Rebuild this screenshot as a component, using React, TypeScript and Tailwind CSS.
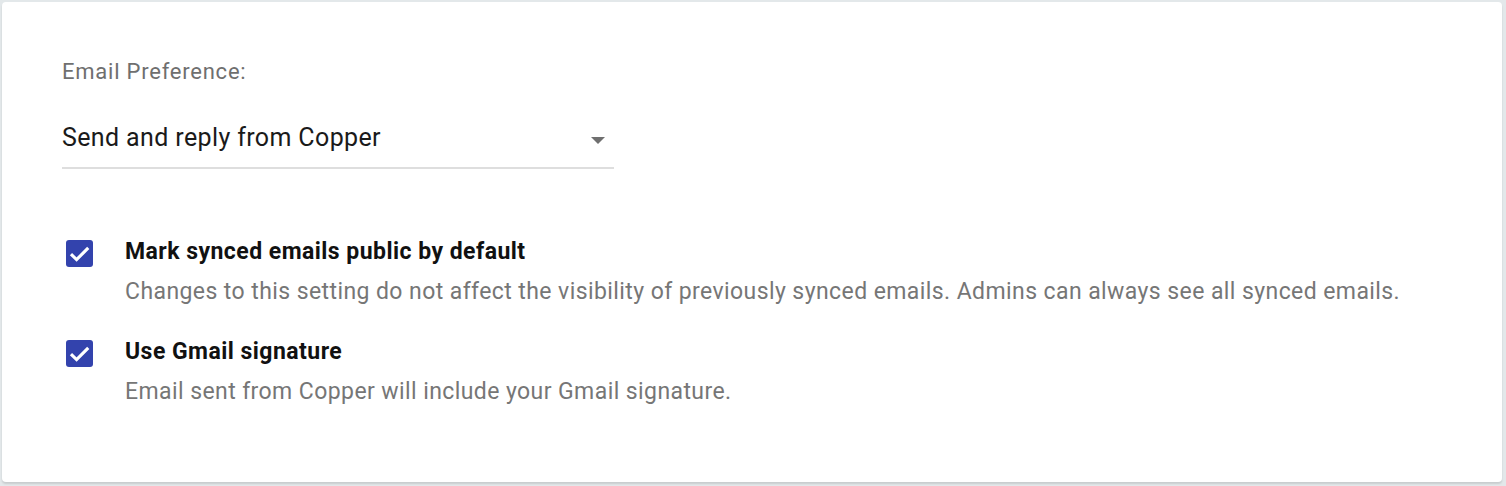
import { useState } from "react";

function Check({ checked, onToggle }: { checked: boolean; onToggle: () => void }) {
  return (
    <button
      onClick={onToggle}
      className={`mt-[3px] flex h-[27px] w-[27px] shrink-0 items-center justify-center rounded-[3px] ${
        checked ? "bg-[#3343ad]" : "border-2 border-[#757575] bg-white"
      }`}
    >
      {checked && (
        <svg width="25" height="25" viewBox="0 0 24 24">
          <path d="M3.8 12.6l5.4 5.3L20.4 6.6" fill="none" stroke="white" strokeWidth="3" />
        </svg>
      )}
    </button>
  );
}

export default function App() {
  const [pub, setPub] = useState(true);
  const [sig, setSig] = useState(true);

  const options = [
    {
      title: "Mark synced emails public by default",
      desc: "Changes to this setting do not affect the visibility of previously synced emails. Admins can always see all synced emails.",
      checked: pub,
      toggle: () => setPub(!pub),
    },
    {
      title: "Use Gmail signature",
      desc: "Email sent from Copper will include your Gmail signature.",
      checked: sig,
      toggle: () => setSig(!sig),
    },
  ];

  return (
    <main className="min-h-screen bg-[#e3e8ea] p-[2px] font-['Roboto',sans-serif]">
      <div className="h-[480px] w-[1500px] rounded-[4px] bg-white px-[60px] pt-[56px] shadow-[0_2px_2px_rgba(0,0,0,0.12)]">
        <div className="text-[22px] leading-[28px] tracking-[0.035em] text-[#6f6f6f]">Email Preference:</div>

        <div className="mt-[36px] flex w-[552px] items-center justify-between border-b-2 border-[#dedede] pb-[13px]">
          <span className="text-[25px] leading-[32px] tracking-[0.015em] text-[#1a1a1a]">
            Send and reply from Copper
          </span>
          <svg width="14" height="7" viewBox="0 0 14 7" className="mr-[9px] mt-[4px]">
            <path d="M0 0h14L7 7z" fill="#6f6f6f" />
          </svg>
        </div>

        <div className="mt-[68px] flex flex-col gap-[31px] pl-[4px]">
          {options.map((o) => (
            <div key={o.title} className="flex gap-[32px]">
              <Check checked={o.checked} onToggle={o.toggle} />
              <div>
                <div className="text-[23px] font-bold leading-[30px] tracking-[0.02em] text-[#111]">{o.title}</div>
                <div className="mt-[11px] text-[23px] leading-[28px] tracking-[0.018em] text-[#767676]">{o.desc}</div>
              </div>
            </div>
          ))}
        </div>
      </div>
    </main>
  );
}
